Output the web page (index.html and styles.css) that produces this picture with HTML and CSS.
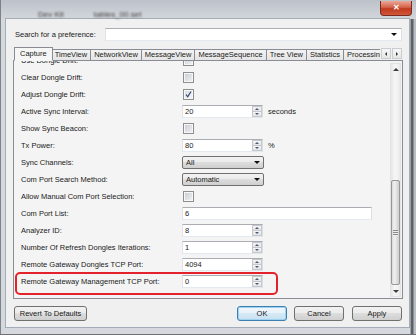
FILE: index.html
```html
<!DOCTYPE html>
<html lang="en">
<head>
    <meta charset="UTF-8">
    <title>Preferences</title>
    <link rel="stylesheet" href="styles.css">
</head>
<body>
<div class="window">
    <div class="titlebar">
        <span class="title first">Dev Kit</span>
        <span class="title">tables_00.set</span>
        <div class="close">&#x2715;</div>
    </div>

    <div class="client">
        <div class="search">
            <label>Search for a preference:</label>
            <div class="combo"><span class="down"></span></div>
        </div>

        <div class="tabs">
            <div class="tab-strip">
                <div class="tab active">Capture</div>
                <div class="tab">TimeView</div>
                <div class="tab">NetworkView</div>
                <div class="tab">MessageView</div>
                <div class="tab">MessageSequence</div>
                <div class="tab">Tree View</div>
                <div class="tab">Statistics</div>
                <div class="tab">Processing</div>
            </div>
            <div class="tab-arrow"><span class="left"></span></div>
            <div class="tab-arrow"><span class="right"></span></div>
        </div>

        <div class="panel">
            <div class="rows">
                <div class="rows-inner">
                    <div class="row"><span class="label">Use Dongle Drift:</span><span class="check"></span></div>
                    <div class="row"><span class="label">Clear Dongle Drift:</span><span class="check"></span></div>
                    <div class="row"><span class="label">Adjust Dongle Drift:</span><span class="check checked"><svg width="9" height="9" viewBox="0 0 9 9"><polyline points="2,4.5 3.7,6.8 7,1.5" fill="none" stroke="#2f437a" stroke-width="1.2"/></svg></span></div>
                    <div class="row"><span class="label">Active Sync Interval:</span><span class="spin"><span class="val">20</span><span class="arrows"><span class="up"><i></i></span><span class="dn"><i></i></span></span></span><span class="unit">seconds</span></div>
                    <div class="row"><span class="label">Show Sync Beacon:</span><span class="check"></span></div>
                    <div class="row"><span class="label">Tx Power:</span><span class="spin"><span class="val">80</span><span class="arrows"><span class="up"><i></i></span><span class="dn"><i></i></span></span></span><span class="unit">%</span></div>
                    <div class="row"><span class="label">Sync Channels:</span><span class="select">All<span class="down"></span></span></div>
                    <div class="row"><span class="label">Com Port Search Method:</span><span class="select">Automatic<span class="down"></span></span></div>
                    <div class="row"><span class="label">Allow Manual Com Port Selection:</span><span class="check"></span></div>
                    <div class="row"><span class="label">Com Port List:</span><span class="text wide">6</span></div>
                    <div class="row"><span class="label">Analyzer ID:</span><span class="spin"><span class="val">8</span><span class="arrows"><span class="up"><i></i></span><span class="dn"><i></i></span></span></span></div>
                    <div class="row"><span class="label">Number Of Refresh Dongles Iterations:</span><span class="spin"><span class="val">1</span><span class="arrows"><span class="up"><i></i></span><span class="dn"><i></i></span></span></span></div>
                    <div class="row"><span class="label">Remote Gateway Dongles TCP Port:</span><span class="spin"><span class="val">4094</span><span class="arrows"><span class="up"><i></i></span><span class="dn"><i></i></span></span></span></div>
                    <div class="row marked"><span class="label">Remote Gateway Management TCP Port:</span><span class="spin"><span class="val">0</span><span class="arrows"><span class="up"><i></i></span><span class="dn"><i></i></span></span></span></div>
                </div>
            </div>
            <div class="scrollbar">
                <div class="sb-btn"><span class="up"></span></div>
                <div class="track-top"></div>
                <div class="thumb"><span class="grip"></span></div>
                <div class="track-bottom"></div>
                <div class="sb-btn"><span class="dn"></span></div>
            </div>
        </div>

        <div class="actions">
            <button class="btn revert">Revert To Defaults</button>
            <button class="btn ok">OK</button>
            <button class="btn">Cancel</button>
            <button class="btn">Apply</button>
        </div>
    </div>
</div>
</body>
</html>
```

FILE: styles.css
```css
* {
    box-sizing: border-box;
}
body {
    margin: 0;
    width: 416px;
    height: 335px;
    overflow: hidden;
    font-family: "Liberation Sans", Arial, sans-serif;
    font-size: 7.5px;
    color: #1a1a1a;
}
.window {
    width: 416px;
    height: 335px;
    display: flex;
    flex-direction: column;
    padding: 0 7px 7px 6px;
    background: linear-gradient(to right, #7d8287 0, #7d8287 1px, #d5d9de 1px, #d5d9de 409px, #dfe2e6 410px, #5d6166 411px, #5d6166 413px, #b9bec4 414px);
    border-bottom: 1px solid #6d7176;
}
.titlebar {
    height: 19px;
    display: flex;
    align-items: flex-start;
    background: linear-gradient(#bcc2c9, #d3d7dc);
    margin: 0 -7px 0 -5px;
    padding-left: 5px;
}
.title {
    margin-top: 10px;
    color: #3a3a3a;
    font-size: 8px;
    filter: blur(1.3px);
    margin-left: 30px;
}
.title.first {
    margin-left: 32px;
}
.close {
    margin-left: auto;
    margin-right: 4px;
    margin-top: 1px;
    width: 32px;
    height: 15px;
    border: 1px solid #7a2a1e;
    border-top: none;
    border-radius: 0 0 4px 4px;
    background: linear-gradient(#e9a896, #d4634b 45%, #c0391f 55%, #d0583a);
    color: #fff;
    font-size: 8px;
    font-weight: bold;
    text-align: center;
    line-height: 14px;
}
.client {
    flex: 1;
    display: flex;
    flex-direction: column;
    background: #f0f0f0;
    padding: 9px 6px 6px 7px;
    box-shadow: 0 0 0 1px #a4adb7;
}

/* search */
.search {
    display: flex;
    align-items: center;
    height: 13px;
}
.search label {
    width: 92px;
    padding-left: 2px;
    flex: none;
}
.combo {
    flex: 1;
    height: 13px;
    margin-right: 1px;
    background: #fff;
    border: 1px solid;
    border-color: #abadb3 #dbdfe6 #e3e9ef #e2e3ea;
    display: flex;
    align-items: center;
    justify-content: flex-end;
    padding-right: 4px;
}
.down {
    width: 0;
    height: 0;
    border-left: 3px solid transparent;
    border-right: 3px solid transparent;
    border-top: 3px solid #111;
}

/* tabs */
.tabs {
    display: flex;
    align-items: flex-end;
    height: 13px;
    margin-top: 6px;
    position: relative;
    z-index: 1;
}
.tab-strip {
    display: flex;
    align-items: flex-end;
    width: 367px;
    height: 14px;
    overflow-x: clip;
    padding-left: 2px;
    margin-bottom: -1px;
}
.tab {
    height: 12px;
    padding: 0 3px;
    margin-left: -1px;
    border: 1px solid #898c95;
    background: linear-gradient(#f3f3f3, #e5e5e5);
    line-height: 10px;
    white-space: nowrap;
}
.tab.active {
    height: 14px;
    padding: 0 5px;
    margin-right: -1px;
    background: #f6f6f6;
    border-bottom-color: #f6f6f6;
    line-height: 11px;
    position: relative;
    z-index: 1;
}
.tab-arrow {
    width: 10px;
    height: 11px;
    margin-left: 1px;
    margin-bottom: 1px;
    border: 1px solid #c9ccd1;
    background: linear-gradient(#f7f7f7, #e6e6e6);
    display: flex;
    align-items: center;
    justify-content: center;
}
.tab-arrow .left {
    border-top: 2px solid transparent;
    border-bottom: 2px solid transparent;
    border-right: 2px solid #333;
}
.tab-arrow .right {
    border-top: 2px solid transparent;
    border-bottom: 2px solid transparent;
    border-left: 2px solid #333;
}

/* panel */
.panel {
    height: 239px;
    border: 1px solid #898c95;
    background: #f4f4f4;
    display: flex;
}
.rows {
    flex: 1;
    overflow: hidden;
    padding-left: 7px;
}
.rows-inner {
    margin-top: -9px;
}
.row {
    height: 17px;
    display: flex;
    align-items: center;
    position: relative;
}
.row .label {
    width: 161px;
    flex: none;
    white-space: nowrap;
}
.row.marked::after {
    content: "";
    position: absolute;
    left: -6px;
    top: -1px;
    width: 259px;
    height: 19px;
    border: 2px solid #e3222b;
    border-radius: 5px;
}
.check {
    width: 11px;
    height: 11px;
    margin-left: 1px;
    border: 1px solid #8e8f8f;
    background: linear-gradient(135deg, #c6cad0, #f4f4f5);
    box-shadow: inset 0 0 0 1px #f7f7f7;
    display: flex;
    align-items: center;
    justify-content: center;
}
.check.checked {
    background: linear-gradient(135deg, #d7dbe0, #f7f7f7);
}
.spin, .text {
    height: 13px;
    background: #fff;
    border: 1px solid;
    border-color: #abadb3 #dbdfe6 #e3e9ef #e2e3ea;
    display: flex;
}
.spin {
    width: 81px;
}
.text.wide {
    width: 190px;
    padding-left: 2px;
    line-height: 11px;
}
.spin .val {
    flex: 1;
    padding-left: 2px;
    line-height: 11px;
}
.spin .arrows {
    width: 10px;
    display: flex;
    flex-direction: column;
}
.spin .arrows span {
    flex: 1;
    border: 1px solid #c4c8cd;
    background: linear-gradient(#f5f5f5, #e4e4e4);
    display: flex;
    align-items: center;
    justify-content: center;
}
.spin .arrows .dn {
    border-top: none;
}
.spin .up i {
    border-left: 2px solid transparent;
    border-right: 2px solid transparent;
    border-bottom: 2px solid #4b5a78;
}
.spin .dn i {
    border-left: 2px solid transparent;
    border-right: 2px solid transparent;
    border-top: 2px solid #4b5a78;
}
.unit {
    margin-left: 5px;
}
.select {
    width: 82px;
    height: 13px;
    border: 1px solid #707070;
    border-radius: 2px;
    background: linear-gradient(#f2f2f2, #ebebeb 45%, #dddddd 50%, #cfcfcf);
    display: flex;
    align-items: center;
    justify-content: space-between;
    padding: 0 3px;
}

/* scrollbar */
.scrollbar {
    width: 11px;
    margin: 2px 1px 1px 0;
    display: flex;
    flex-direction: column;
    border: 1px solid #e2e2e2;
    background: linear-gradient(to right, #e6e6e6, #f5f5f5 40%, #f5f5f5 60%, #e9e9e9);
}
.sb-btn {
    height: 10px;
    display: flex;
    align-items: center;
    justify-content: center;
}
.sb-btn .up {
    border-left: 3px solid transparent;
    border-right: 3px solid transparent;
    border-bottom: 3px solid #3e3e3e;
}
.sb-btn .dn {
    border-left: 3px solid transparent;
    border-right: 3px solid transparent;
    border-top: 3px solid #3e3e3e;
}
.track-top {
    height: 106px;
}
.thumb {
    height: 105px;
    border: 1px solid #979797;
    border-radius: 2px;
    background: linear-gradient(to right, #dcdcdc, #f3f3f3 45%, #e4e4e4 55%, #d0d0d0);
    display: flex;
    align-items: center;
    justify-content: center;
}
.grip {
    width: 5px;
    height: 6px;
    background: repeating-linear-gradient(#8b8b8b 0, #8b8b8b 1px, #eeeeee 1px, #eeeeee 2px);
}
.track-bottom {
    flex: 1;
}

/* buttons */
.actions {
    display: flex;
    gap: 7px;
    height: 15px;
    margin-top: 7px;
}
.btn {
    width: 50px;
    height: 15px;
    padding: 0;
    border: 1px solid #707070;
    border-radius: 3px;
    background: linear-gradient(#f2f2f2, #ebebeb 45%, #dddddd 50%, #cfcfcf);
    font-family: inherit;
    font-size: 7.5px;
    color: #1a1a1a;
}
.btn.revert {
    width: 73px;
    margin-left: 1px;
}
.btn.ok {
    margin-left: auto;
    border-color: #3c7fb1;
    box-shadow: inset 0 0 0 1px #9cd3f3;
    background: linear-gradient(#f2f7fb, #e7f2f9 45%, #d6e9f5 50%, #c8e0f0);
}
.btn:last-child {
    margin-left: 1px;
    margin-right: 1px;
}
```
